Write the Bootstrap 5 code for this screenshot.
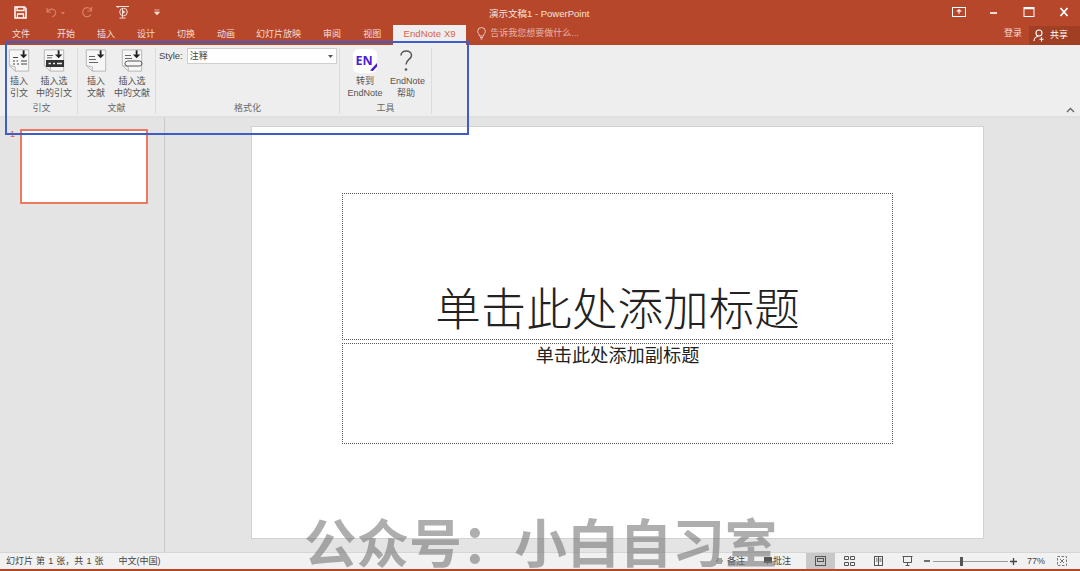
<!DOCTYPE html>
<html lang="zh-CN">
<head>
<meta charset="utf-8">
<title>演示文稿1 - PowerPoint</title>
<link href="https://cdn.jsdelivr.net/npm/bootstrap@5.3.0/dist/css/bootstrap.min.css" rel="stylesheet">
<style>
html,body{height:571px;overflow:hidden;}
body{font-family:"Liberation Sans","Noto Sans CJK SC",sans-serif;font-size:9px;color:#444;background:#e4e4e4;line-height:1.2;}
.shell{width:1080px;height:571px;overflow:hidden;}
.titlebar{height:24px;background:#b7472a;color:#fff;}
.qat{width:165px;padding-left:14px;}
.q-undo{margin-left:18px;}.q-redo{margin-left:14px;}.q-show{margin-left:21.5px;}.q-more{margin-left:24.5px;}
.doc-title{left:489px;top:8px;font-size:9.5px;color:#f6e3dd;}
.win-btns{margin-left:auto;gap:21px;padding-right:9px;}
.tabsbar{height:21px;background:#b7472a;color:#f6ddd6;padding-left:12px;}
.tab-item{margin-right:22px;padding-top:5px;white-space:nowrap;}
.tab-item.first{margin-right:27px;}
.tab-item.pre-long{margin-right:21px;}
.tab-item.last{margin-right:12px;}
.tab-active{width:73px;height:20px;margin-top:1px;background:#eeeeee;color:#d9604a;font-size:9.5px;text-align:center;padding-top:3px;letter-spacing:.1px;}
.tell{margin-left:11px;gap:4px;padding-top:3px;color:#e6b4a6;}
.tell span{padding-top:1px;}
.login{margin-left:auto;padding-top:4px;margin-right:7px;}
.share{width:51px;height:19px;background:#a03f24;gap:5px;padding-left:4px;margin-top:2px;}
.ribbon{height:71px;background:#eeeeee;padding:3px 0 0 6px;}
.rgroup{height:66px;border-right:1px solid #dcdcdc;}
.g1{width:72px;}.g2{width:78px;}.g3{width:184px;}.g4{width:92px;}
.rbtns{height:55px;}
.rbtn{text-align:center;line-height:12px;color:#555;white-space:nowrap;flex-shrink:0;}
.rbtn svg{display:block;margin:0 auto 2px;}
.b1{width:26px;}.b2{width:44px;}.b3{width:36px;}.b4{width:36px;}.b5{width:50px;}.b6{width:32px;}
.rlabel{text-align:center;color:#666;line-height:12px;}
.style-row{padding:0 2px 0 3px;gap:4px;height:54px;}
.style-label{font-size:9.5px;padding-top:2px;}
.combo{width:151px;height:16px;background:#fff;border:1px solid #cfcfcf;padding:0 3px 0 2px;}
.up-chev{right:5px;bottom:3px;}
.strip{height:2px;background:#e0e0e0;}
.main{height:434px;background:#e4e4e4;}
.thumbs{width:165px;border-right:1px solid #c9c9c9;padding:11px 0 0 10px;gap:5px;color:#d4654a;}
.thumb{width:128px;height:75px;background:#fff;border:2px solid #ea7a60;}
.stage{padding:8px 0 0 86px;}
.slide{width:733px;height:413px;background:#fff;border:1px solid #d2d2d2;padding:66px 0 0 90px;}
.ph{width:551px;border:1px dotted #555;text-align:center;color:#222;}
.ph-title{height:147px;font-size:45.6px;font-weight:300;line-height:1;padding-bottom:5px;margin-bottom:3px;}
.ph-sub{height:101px;font-size:18.2px;line-height:25px;}
.statusbar{height:17px;background:#f1f1f1;border-top:1px solid #d6d6d6;padding-left:6px;color:#444;}
.status-count{word-spacing:.6px;}
.lang{margin-left:15px;}
.status-right{margin-left:auto;}
.note1{width:48px;gap:4px;}
.note2{width:42px;gap:1px;}
.view-btn{width:29px;height:16px;}
.view-on{background:#c8c8c8;}
.zoom-minus{margin-left:2px;}
.zoom-track{width:75px;height:1px;background:#9a9a9a;margin:0 2px 0 3px;}
.zoom-thumb{left:27px;top:-4px;width:3px;height:9px;background:#555;}
.pct{width:20px;margin:0 10px;}
.fit{margin-right:13px;}
.redline{height:2px;background:#b7472a;}
.blue-box{left:5px;top:41px;width:464px;height:94px;border:2px solid #3f5cc8;pointer-events:none;}
.wmark{left:304px;top:515px;font-size:52.6px;font-weight:700;color:rgba(120,120,120,.6);line-height:1.15;white-space:nowrap;pointer-events:none;}
</style>
</head>
<body>
<svg width="0" height="0" class="position-absolute">
  <symbol id="page" viewBox="0 0 26 26">
    <path d="M2.500 1.500H23.500V24.500H9L2.500 18.500Z" fill="#f6f6f6" stroke="#b4b4b4"/>
    <path d="M2.500 18.500L9 20V24.500" fill="none" stroke="#b4b4b4"/>
    <path d="M18 2V7" stroke="#222" stroke-width="2"/>
    <path d="M14 6.500H22L18 10.500Z" fill="#222"/>
  </symbol>
</svg>
<div class="shell position-relative d-flex flex-column">

  <div class="titlebar d-flex align-items-center position-relative">
    <div class="qat d-flex align-items-center">
      <svg width="13" height="13" viewBox="0 0 13 13"><path d="M1 1H10.500L12 2.500V12H1Z" fill="none" stroke="#fff" stroke-width="1.500"/><path d="M3 1V4.500H10V1M3.500 12V8H9.500V12" fill="none" stroke="#fff" stroke-width="1.300"/></svg>
      <svg width="22" height="11" viewBox="0 0 22 11" class="q-undo"><path d="M2 1V5H6M2 5C4 2 8 1 10 3.500S10 9 7 10" fill="none" stroke="#d8816b" stroke-width="1.200"/><path d="M16 5H20L18 7.500Z" fill="#d8816b"/></svg>
      <svg width="12" height="12" viewBox="0 0 12 12" class="q-redo"><path d="M10.500 1V5H6.500M10.500 5A4.500 4.500 0 1 0 10 8.500" fill="none" stroke="#d8816b" stroke-width="1.200"/></svg>
      <svg width="15" height="14" viewBox="0 0 15 14" class="q-show"><path d="M1 1.500H14M3 1.500V3M7.500 3V12.500M4.500 13H10.500" fill="none" stroke="#f5ddd6"/><circle cx="8.500" cy="7" r="3.800" fill="none" stroke="#f5ddd6"/><path d="M7.500 5L10.500 7L7.500 9Z" fill="#f5ddd6"/></svg>
      <svg width="6" height="7" viewBox="0 0 6 7" class="q-more"><path d="M0.500 1H5.500M0.500 3H5.500L3 6Z" fill="#f5ddd6" stroke="#f5ddd6" stroke-width=".7"/></svg>
    </div>
    <div class="doc-title position-absolute">演示文稿1 - PowerPoint</div>
    <div class="win-btns d-flex align-items-center">
      <svg width="14" height="10" viewBox="0 0 14 10"><path d="M4 4.500L7 2L10 4.500Z" fill="#fff"/><path d="M7 4V7" stroke="#fff"/><rect x=".5" y=".5" width="13" height="9" fill="none" stroke="#fff" stroke-width="1"/></svg>
      <svg width="14" height="10" viewBox="0 0 14 10"><path d="M3 6H10" stroke="#fff" stroke-width="1.600"/></svg>
      <svg width="14" height="10" viewBox="0 0 14 10"><rect x="2" y=".5" width="10" height="9" fill="none" stroke="#fff"/><path d="M2 1.500H12" stroke="#fff" stroke-width="1.500"/></svg>
      <svg width="14" height="10" viewBox="0 0 14 10"><path d="M3.500 1L10.500 9M10.500 1L3.500 9" stroke="#fff" stroke-width="1.800"/></svg>
    </div>
  </div>

  <div class="tabsbar d-flex">
    <div class="tab-item first">文件</div>
    <div class="tab-item">开始</div>
    <div class="tab-item">插入</div>
    <div class="tab-item">设计</div>
    <div class="tab-item">切换</div>
    <div class="tab-item pre-long">动画</div>
    <div class="tab-item">幻灯片放映</div>
    <div class="tab-item">审阅</div>
    <div class="tab-item last">视图</div>
    <div class="tab-active">EndNote X9</div>
    <div class="tell d-flex align-items-start">
      <svg width="9" height="13" viewBox="0 0 9 13"><path d="M2.500 9C2.500 7 .7 6.500.7 4.300A3.800 3.800 0 0 1 8.300 4.300C8.300 6.500 6.500 7 6.500 9ZM3 10.500H6M3.500 12H5.500" fill="none" stroke="#f2d2c9" stroke-width=".9"/></svg>
      <span>告诉我您想要做什么...</span>
    </div>
    <div class="login">登录</div>
    <div class="share d-flex align-items-center text-white">
      <svg width="12" height="13" viewBox="0 0 12 13"><circle cx="6" cy="4" r="3" fill="none" stroke="#fff" stroke-width="1.100"/><path d="M1 12C1 9 3.500 7.500 5.500 7.500M8.500 8V12.500M6.500 10.200H10.500" fill="none" stroke="#fff" stroke-width="1.100"/></svg>
      <span>共享</span>
    </div>
  </div>

  <div class="ribbon d-flex position-relative">
    <div class="rgroup g1 d-flex flex-column">
      <div class="rbtns d-flex">
        <div class="rbtn b1">
          <svg width="24" height="25"><use href="#page"/><path d="M6 9.500H11M6 13H8M9.500 13H11M6 16H8M10 16H12M14 13H20M14 16H20" stroke="#444" stroke-width="1.200"/></svg>
          插入<br>引文
        </div>
        <div class="rbtn b2">
          <svg width="24" height="25"><use href="#page"/><path d="M5 7.500H11M5 9.800H10" stroke="#666"/><rect x="4" y="12" width="18" height="7" fill="#333"/><path d="M6.500 15.500H9M11 15.500H13M15 15.500H20" stroke="#eee" stroke-width="1.400"/></svg>
          插入选<br>中的引文
        </div>
      </div>
      <div class="rlabel">引文</div>
    </div>
    <div class="rgroup g2 d-flex flex-column">
      <div class="rbtns d-flex">
        <div class="rbtn b3">
          <svg width="24" height="25"><use href="#page"/><path d="M5 8.500H11M5 11.500H12M5 14.500H14" stroke="#666"/></svg>
          插入<br>文献
        </div>
        <div class="rbtn b4">
          <svg width="24" height="25"><use href="#page"/><path d="M5 7.500H11M5 10.500H12" stroke="#666"/><rect x="5" y="13" width="17" height="5" rx="2.500" fill="none" stroke="#555"/></svg>
          插入选<br>中的文献
        </div>
      </div>
      <div class="rlabel">文献</div>
    </div>
    <div class="rgroup g3 d-flex flex-column">
      <div class="style-row d-flex align-items-start">
        <span class="style-label">Style:</span>
        <div class="combo d-flex align-items-center justify-content-between">
          <span>注释</span>
          <svg width="5" height="3" viewBox="0 0 5 3"><path d="M0 0H5L2.500 3Z" fill="#555"/></svg>
        </div>
      </div>
      <div class="rlabel">格式化</div>
    </div>
    <div class="rgroup g4 d-flex flex-column">
      <div class="rbtns d-flex">
        <div class="rbtn b5">
          <svg width="24" height="25" viewBox="0 0 24 25"><rect x="0" y="1" width="24" height="24" rx="6" fill="#fff"/><text x="11" y="16.500" text-anchor="middle" font-family="Open Sans,sans-serif" font-weight="700" font-size="12.500" fill="#4b1fd1">EN</text><path d="M17 22.500L24 15V18.500L20 23Z" fill="#4b1fd1"/></svg>
          转到<br>EndNote
        </div>
        <div class="rbtn b6">
          <svg width="24" height="25" viewBox="0 0 24 25"><path d="M7 7.500C7 1.500 17.500 1.500 17.500 7.500C17.500 11.500 12 11.500 12 16.500" fill="none" stroke="#555" stroke-width="1.500"/><circle cx="12" cy="21.500" r="1.300" fill="#555"/></svg>
          EndNote<br>帮助
        </div>
      </div>
      <div class="rlabel">工具</div>
    </div>
    <svg class="up-chev position-absolute" width="9" height="6" viewBox="0 0 9 6"><path d="M1 5L4.500 1.500L8 5" fill="none" stroke="#666" stroke-width="1.400"/></svg>
  </div>
  <div class="strip"></div>

  <div class="main d-flex">
    <div class="thumbs d-flex flex-shrink-0">
      <span>1</span>
      <div class="thumb flex-shrink-0"></div>
    </div>
    <div class="stage">
      <div class="slide">
        <div class="ph ph-title d-flex align-items-end justify-content-center">单击此处添加标题</div>
        <div class="ph ph-sub">单击此处添加副标题</div>
      </div>
    </div>
  </div>

  <div class="statusbar d-flex align-items-center">
    <span class="status-count">幻灯片 第 1 张，共 1 张</span>
    <span class="lang">中文(中国)</span>
    <div class="status-right d-flex align-items-center">
      <div class="note1 d-flex align-items-center">
        <svg width="7" height="6" viewBox="0 0 7 6"><path d="M1 1H6M0 3H7M1 5H6" stroke="#555"/></svg><span>备注</span>
      </div>
      <div class="note2 d-flex align-items-center">
        <svg width="8" height="8" viewBox="0 0 8 8"><path d="M0 0H8V6H4L3 8V6H0Z" fill="#555"/></svg><span>批注</span>
      </div>
      <div class="view-btn view-on d-flex align-items-center justify-content-center">
        <svg width="11" height="10" viewBox="0 0 11 10"><rect x=".5" y=".5" width="10" height="9" fill="none" stroke="#555"/><rect x="2.500" y="2.500" width="6" height="3" fill="none" stroke="#555"/></svg>
      </div>
      <div class="view-btn d-flex align-items-center justify-content-center">
        <svg width="11" height="10" viewBox="0 0 11 10"><path d="M.5.500H4.500V3.500H.5ZM6.500.500H10.500V3.500H6.500ZM.5 6.500H4.500V9.500H.5ZM6.500 6.500H10.500V9.500H6.500Z" fill="none" stroke="#555"/></svg>
      </div>
      <div class="view-btn d-flex align-items-center justify-content-center">
        <svg width="11" height="10" viewBox="0 0 11 10"><rect x="1.500" y=".5" width="8" height="9" fill="none" stroke="#555"/><path d="M5.500.5V9.500M3 3H4.500M3 5H4.500M6.500 3H8.500M6.500 5H8.500" stroke="#555"/></svg>
      </div>
      <div class="view-btn d-flex align-items-center justify-content-center">
        <svg width="11" height="10" viewBox="0 0 11 10"><path d="M.5.500H10.500M1.500.500V6.500H9.500V.500M5.500 6.500V9M3.500 9.500H7.500" fill="none" stroke="#555"/></svg>
      </div>
      <svg width="6" height="2" viewBox="0 0 6 2" class="zoom-minus"><path d="M0 1H6" stroke="#444" stroke-width="1.500"/></svg>
      <div class="zoom-track position-relative"><div class="zoom-thumb position-absolute"></div></div>
      <svg width="7" height="7" viewBox="0 0 7 7"><path d="M0 3.500H7M3.500 0V7" stroke="#444" stroke-width="1.300"/></svg>
      <span class="pct">77%</span>
      <svg width="10" height="10" viewBox="0 0 10 10" class="fit"><rect x=".5" y=".5" width="9" height="9" fill="none" stroke="#777" stroke-dasharray="2.500 1.500"/><path d="M3 3L7 7M7 3L3 7" stroke="#777"/></svg>
    </div>
  </div>
  <div class="redline"></div>

  <div class="blue-box position-absolute"></div>
  <div class="wmark position-absolute">公众号：小白自习室</div>
</div>
<script src="https://cdn.jsdelivr.net/npm/bootstrap@5.3.0/dist/js/bootstrap.bundle.min.js"></script>
</body>
</html>
